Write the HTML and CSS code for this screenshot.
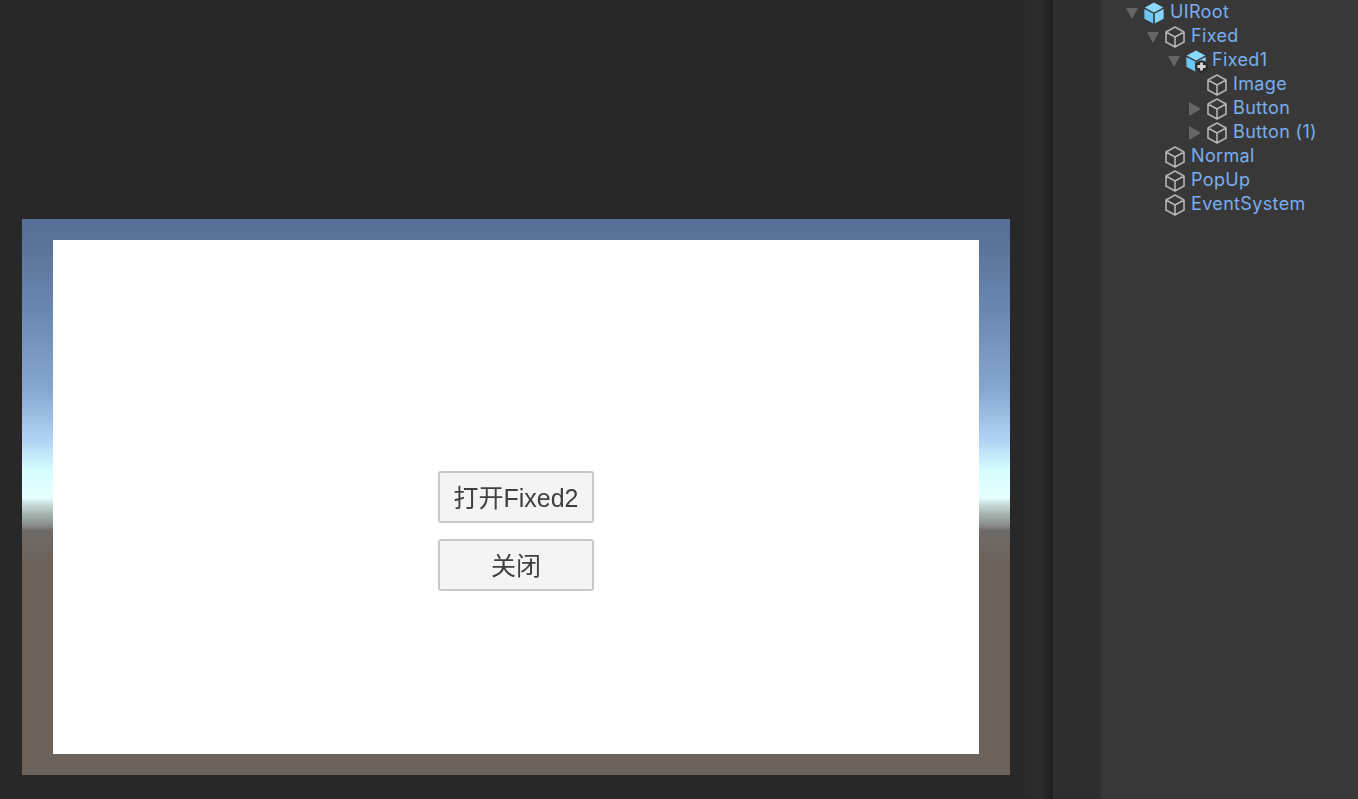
FILE: index.html
```html
<!DOCTYPE html>
<html lang="zh-CN">
<head>
    <meta charset="UTF-8">
    <meta name="viewport" content="width=device-width, initial-scale=1.0">
    <title>UIRoot</title>
    <link rel="stylesheet" href="styles.css">
</head>
<body>
    <svg class="icon-defs" width="0" height="0" aria-hidden="true">
        <symbol id="cube-outline" viewBox="0 0 20 22">
            <path d="M10 1 19 6V16L10 21 1 16V6Z M1 6 10 11 19 6 M10 11V21" fill="none" stroke="#b4b4b4" stroke-width="1.6" stroke-linejoin="round"/>
        </symbol>
        <symbol id="cube-solid" viewBox="0 0 20 22">
            <path d="M10 .5 19.2 5.5 10 10.4 .8 5.5Z" fill="#8adafe"/>
            <path d="M.4 7 9.2 11.6V21.6L.4 16.7Z" fill="#6cc6f4"/>
            <path d="M19.6 7V16.7L10.8 21.6V11.6Z" fill="#82d4fc"/>
        </symbol>
    </svg>

    <main class="scene">
        <div class="game-view">
            <div class="panel">
                <button class="ui-button" type="button">打开Fixed2</button>
                <button class="ui-button" type="button">关闭</button>
            </div>
        </div>
    </main>

    <aside class="side">
        <div class="gutter"></div>
        <ul class="tree">
            <li class="row depth-0">
                <span class="arrow arrow-down"></span>
                <svg class="cube"><use href="#cube-solid"/></svg>
                <span class="name">UIRoot</span>
            </li>
            <li class="row depth-1">
                <span class="arrow arrow-down"></span>
                <svg class="cube"><use href="#cube-outline"/></svg>
                <span class="name">Fixed</span>
            </li>
            <li class="row depth-2">
                <span class="arrow arrow-down"></span>
                <span class="cube-wrap">
                    <svg class="cube"><use href="#cube-solid"/></svg>
                    <svg class="badge" viewBox="0 0 14 14">
                        <circle cx="7" cy="7" r="6.8" fill="#2a2a2a"/>
                        <path d="M7 2.6V11.4M2.6 7H11.4" stroke="#d6d6d6" stroke-width="3"/>
                    </svg>
                </span>
                <span class="name">Fixed1</span>
            </li>
            <li class="row depth-3">
                <span class="arrow"></span>
                <svg class="cube"><use href="#cube-outline"/></svg>
                <span class="name">Image</span>
            </li>
            <li class="row depth-3">
                <span class="arrow arrow-right"></span>
                <svg class="cube"><use href="#cube-outline"/></svg>
                <span class="name">Button</span>
            </li>
            <li class="row depth-3">
                <span class="arrow arrow-right"></span>
                <svg class="cube"><use href="#cube-outline"/></svg>
                <span class="name">Button (1)</span>
            </li>
            <li class="row depth-1">
                <span class="arrow"></span>
                <svg class="cube"><use href="#cube-outline"/></svg>
                <span class="name">Normal</span>
            </li>
            <li class="row depth-1">
                <span class="arrow"></span>
                <svg class="cube"><use href="#cube-outline"/></svg>
                <span class="name">PopUp</span>
            </li>
            <li class="row depth-1">
                <span class="arrow"></span>
                <svg class="cube"><use href="#cube-outline"/></svg>
                <span class="name">EventSystem</span>
            </li>
        </ul>
    </aside>
</body>
</html>
```

FILE: styles.css
```css
html, body {
    height: 100%;
}

body {
    margin: 0;
    display: flex;
    overflow: hidden;
    background-color: #282828;
    font-family: Inter, "Liberation Sans", sans-serif;
}

.icon-defs {
    position: absolute;
}

.scene {
    width: 1053px;
    flex: none;
    padding: 219px 0 0 22px;
    box-sizing: border-box;
    background: linear-gradient(to right, #282828 0, #282828 1020px, #2c2c2c 1040px, #1e1e1e 1053px);
}

.game-view {
    width: 988px;
    height: 556px;
    padding: 21px 31px;
    box-sizing: border-box;
    background: linear-gradient(to bottom,
        #566e96 0,
        #5b7499 30px,
        #6a87b2 90px,
        #86a6d0 170px,
        #b2d2f5 221px,
        #d6fdff 251px,
        #e6ffff 279px,
        #c4d8d4 286px,
        #a4b0ac 296px,
        #8a8f8c 306px,
        #6f6a66 312px,
        #6b625b 340px,
        #6b625b 100%);
}

.panel {
    height: 514px;
    padding-top: 231px;
    box-sizing: border-box;
    display: flex;
    flex-direction: column;
    align-items: center;
    gap: 16px;
    background-color: #fff;
}

.ui-button {
    width: 156px;
    height: 52px;
    padding: 0 0 3px;
    background-color: #f4f4f4;
    border: 2px solid #c8c8c8;
    border-radius: 3px;
    color: #404040;
    font-family: "Liberation Sans", "Noto Sans CJK SC", sans-serif;
    font-size: 25px;
    filter: blur(0.45px);
}

.side {
    flex: 1;
    display: flex;
    background-color: #383838;
}

.gutter {
    width: 48px;
    flex: none;
    background-color: #2e2e2e;
}

.tree {
    list-style: none;
    margin: 0;
    padding: 0;
}

.row {
    height: 24px;
    display: flex;
    align-items: center;
    color: #7aaeee;
    font-size: 18px;
    letter-spacing: 0.35px;
    white-space: nowrap;
}

.depth-0 { padding-left: 25px; }
.depth-1 { padding-left: 46px; }
.depth-2 { padding-left: 67px; }
.depth-3 { padding-left: 88px; }

.arrow {
    width: 12px;
    height: 11px;
    margin-right: 6px;
    flex: none;
}

.arrow-down {
    margin-top: 3px;
    background-color: #666;
    clip-path: polygon(0 0, 100% 0, 50% 100%);
}

.arrow-right {
    height: 14px;
    margin-top: 2px;
    background-color: #666;
    clip-path: polygon(0 0, 100% 50%, 0 100%);
}

.cube {
    display: block;
    width: 20px;
    height: 22px;
    flex: none;
    margin-top: 2px;
}

.cube-wrap {
    position: relative;
    width: 20px;
    height: 22px;
    flex: none;
    margin-top: 2px;
}

.cube-wrap .cube {
    margin-top: 0;
}

.badge {
    position: absolute;
    right: -2px;
    bottom: -1px;
    width: 13px;
    height: 13px;
}

.name {
    margin-left: 6px;
    margin-bottom: 2px;
}
```
